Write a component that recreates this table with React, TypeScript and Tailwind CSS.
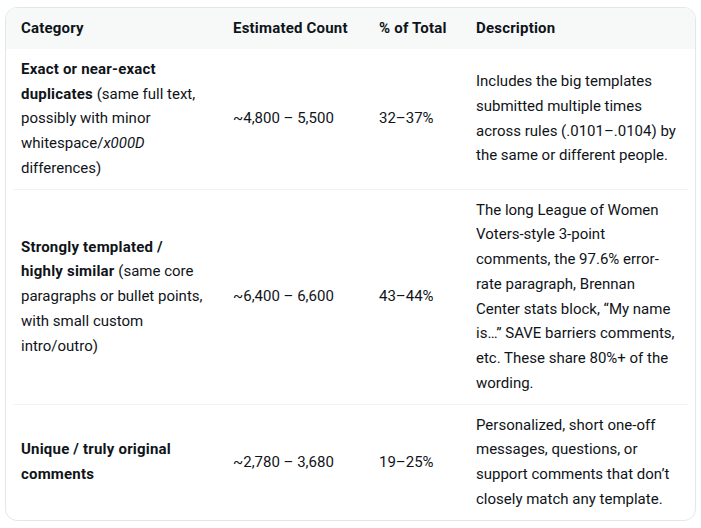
const rows = [
  {
    category: (
      <>
        <strong className="font-bold tracking-[0.2px]">Exact or near-exact duplicates</strong> (same full text,
        possibly with minor whitespace/<em>x000D</em> differences)
      </>
    ),
    count: '~4,800 – 5,500',
    pct: '32–37%',
    desc: 'Includes the big templates submitted multiple times across rules (.0101–.0104) by the same or different people.',
  },
  {
    category: (
      <>
        <strong className="font-bold tracking-[0.2px]">
          Strongly templated /<br />
          highly similar
        </strong>{' '}
        (same core paragraphs or bullet points, with small custom intro/outro)
      </>
    ),
    count: '~6,400 – 6,600',
    pct: '43–44%',
    desc: 'The long League of Women Voters-style 3-point comments, the 97.6% error-rate paragraph, Brennan Center stats block, “My name is…” SAVE barriers comments, etc. These share 80%+ of the wording.',
  },
  {
    category: <strong className="font-bold tracking-[0.2px]">Unique / truly original comments</strong>,
    count: '~2,780 – 3,680',
    pct: '19–25%',
    desc: 'Personalized, short one-off messages, questions, or support comments that don’t closely match any template.',
  },
]

const cols = 'grid grid-cols-[212px_146px_97px_220px]'

export default function App() {
  return (
    <div className="min-h-screen bg-white px-[5px] pt-[7px] font-['Roboto',sans-serif] text-[15px] leading-[24.75px] text-[#0f1419]">
      <div className="overflow-hidden rounded-xl border border-[#e1e8ea]">
        {/* header */}
        <div className="bg-[#f7f9f9] px-[7px]">
          <div className={`${cols} py-2 font-bold tracking-[0.2px]`}>
            <div className="px-2">Category</div>
            <div className="px-2">Estimated Count</div>
            <div className="px-2">% of Total</div>
            <div className="px-2">Description</div>
          </div>
        </div>
        {/* body */}
        <div className="px-[7px]">
          {rows.map((r, i) => (
            <div
              key={i}
              className={`${cols} items-center py-2 ${i < rows.length - 1 ? 'border-b border-[#eff3f4]' : ''}`}
            >
              <div className="px-2">{r.category}</div>
              <div className="px-2">{r.count}</div>
              <div className="px-2">{r.pct}</div>
              <div className="px-2">{r.desc}</div>
            </div>
          ))}
        </div>
      </div>
    </div>
  )
}
